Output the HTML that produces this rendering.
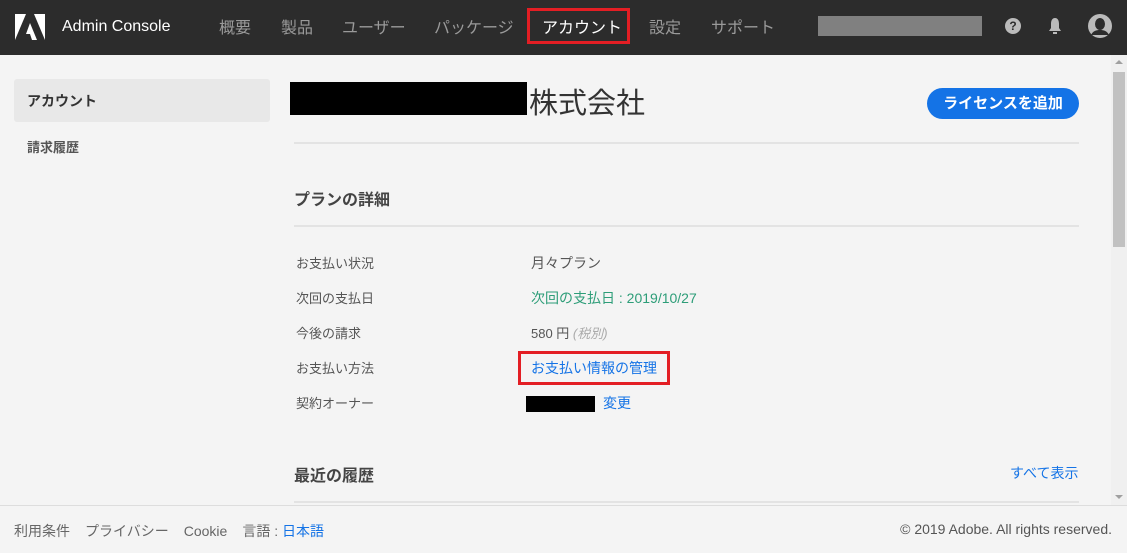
<!DOCTYPE html>
<html><head><meta charset="utf-8"><style>
*{margin:0;padding:0;box-sizing:border-box}
body{width:1127px;height:553px;background:#f4f4f4;font-family:"Liberation Sans","Noto Sans CJK JP",sans-serif;position:relative;overflow:hidden;color:#4b4b4b}
.a{position:absolute;white-space:nowrap}
.hdr{position:absolute;left:0;top:0;width:1127px;height:55px;background:#2c2c2c}
.nav{color:#9a9a9a;font-size:16px;top:14px}
.line{position:absolute;height:2px;background:#e3e3e3}
.lbl{font-size:13px;color:#555;left:296px}
.val{font-size:14px;left:531px;color:#555}
</style></head><body>
<div class="hdr"></div>
<svg class="a" style="left:15px;top:14px" width="30" height="26" viewBox="0 0 30 26"><polygon points="0,0 11,0 0,26" fill="#fff"/><polygon points="19,0 30,0 30,26" fill="#fff"/><polygon points="15,9 22,26 17,26 15,20 11,20 15,9" fill="#fff"/></svg>
<div class="a" style="left:62px;top:18px;color:#fff;font-size:16px">Admin Console</div>
<div class="a nav" style="left:219px">概要</div>
<div class="a nav" style="left:281px">製品</div>
<div class="a nav" style="left:342px">ユーザー</div>
<div class="a nav" style="left:434px">パッケージ</div>
<div class="a" style="left:527px;top:8px;width:103px;height:36px;border:3px solid #e31e24"></div>
<div class="a nav" style="left:542px;color:#fff">アカウント</div>
<div class="a nav" style="left:649px">設定</div>
<div class="a nav" style="left:711px">サポート</div>
<div class="a" style="left:818px;top:16px;width:164px;height:20px;background:#808080"></div>
<div class="a" style="left:1005px;top:18px;width:16px;height:16px;border-radius:50%;background:#bbb;color:#2c2c2c;font-size:12px;font-weight:bold;text-align:center;line-height:16px">?</div>
<svg class="a" style="left:1047px;top:17px" width="16" height="18" viewBox="0 0 16 18"><path d="M8 1C5 1 4 4 4 7v4L2 14h12l-2-3V7c0-3-1-6-4-6z" fill="#bbb"/><rect x="6" y="15" width="4" height="2" fill="#bbb"/></svg>
<svg class="a" style="left:1088px;top:14px" width="24" height="24" viewBox="0 0 24 24"><circle cx="12" cy="12" r="12" fill="#bbb"/><ellipse cx="12" cy="10" rx="5" ry="6" fill="#2c2c2c"/><path d="M3 21c2-4 5-5 9-5s7 1 9 5" fill="#2c2c2c"/></svg>
<div class="a" style="left:14px;top:79px;width:256px;height:43px;background:#e8e8e8;border-radius:3px"></div>
<div class="a" style="left:27px;top:91px;font-size:14px;font-weight:bold;color:#333">アカウント</div>
<div class="a" style="left:27px;top:137px;font-size:13px;font-weight:bold;color:#555">請求履歴</div>
<div class="a" style="left:290px;top:82px;width:237px;height:33px;background:#000"></div>
<div class="a" style="left:529px;top:80px;font-size:29px;color:#333">株式会社</div>
<div class="a" style="left:927px;top:88px;width:152px;height:31px;border-radius:16px;background:#1473e6;color:#fff;font-size:15px;font-weight:bold;text-align:center;line-height:31px">ライセンスを追加</div>
<div class="line" style="left:294px;top:142px;width:785px"></div>
<div class="a" style="left:294px;top:186px;font-size:16px;font-weight:bold;color:#444">プランの詳細</div>
<div class="line" style="left:294px;top:225px;width:785px"></div>
<div class="a lbl" style="top:253px">お支払い状況</div>
<div class="a val" style="top:253px">月々プラン</div>
<div class="a lbl" style="top:288px">次回の支払日</div>
<div class="a val" style="top:288px;color:#2d9d78;font-size:14px">次回の支払日 : 2019/10/27</div>
<div class="a lbl" style="top:323px">今後の請求</div>
<div class="a val" style="top:323px;font-size:13px">580 円 <i style="color:#aaa">(税別)</i></div>
<div class="a lbl" style="top:358px">お支払い方法</div>
<div class="a" style="left:518px;top:351px;width:152px;height:34px;border:3px solid #e31e24"></div>
<div class="a val" style="top:358px;color:#1473e6">お支払い情報の管理</div>
<div class="a lbl" style="top:393px">契約オーナー</div>
<div class="a" style="left:526px;top:396px;width:69px;height:16px;background:#000"></div>
<div class="a" style="left:603px;top:393px;font-size:14px;color:#1473e6">変更</div>
<div class="a" style="left:294px;top:462px;font-size:16px;font-weight:bold;color:#444">最近の履歴</div>
<div class="a" style="left:1010px;top:463px;font-size:14px;color:#1473e6">すべて表示</div>
<div class="line" style="left:294px;top:501px;width:785px"></div>
<div class="a" style="left:1111px;top:55px;width:16px;height:451px;background:#f0f0f0"></div>
<div class="a" style="left:1113px;top:72px;width:12px;height:175px;background:#c1c1c1"></div>
<div class="a" style="left:1115px;top:60px;width:0;height:0;border:4px solid transparent;border-bottom-color:#a0a0a0;border-top:0"></div>
<div class="a" style="left:1115px;top:495px;width:0;height:0;border:4px solid transparent;border-top-color:#a0a0a0;border-bottom:0"></div>
<div class="a" style="left:0;top:505px;width:1127px;height:1px;background:#ddd"></div>
<div class="a" style="left:14px;top:521px;font-size:14px;color:#666;word-spacing:0">利用条件<span style="display:inline-block;width:15px"></span>プライバシー<span style="display:inline-block;width:15px"></span>Cookie<span style="display:inline-block;width:15px"></span>言語 : <span style="color:#1473e6">日本語</span></div>
<div class="a" style="left:900px;top:521px;width:212px;text-align:right;font-size:14px;color:#555">© 2019 Adobe. All rights reserved.</div>
</body></html>
